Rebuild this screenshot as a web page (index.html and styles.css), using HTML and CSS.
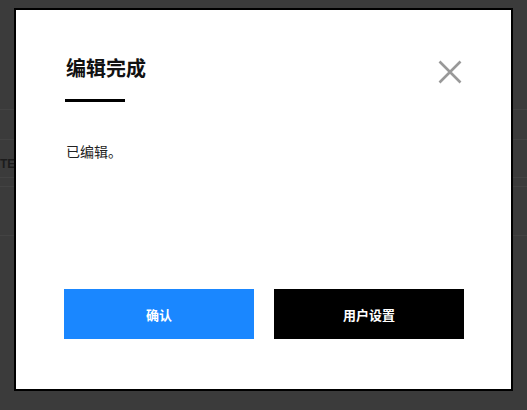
FILE: index.html
```html
<!DOCTYPE html>
<html lang="zh-CN">
<head>
<meta charset="utf-8">
<title>编辑完成</title>
<link rel="stylesheet" href="styles.css">
</head>
<body>
<div class="page">
  <div class="row r1"></div>
  <div class="row r2"></div>
  <div class="row r3"><span class="note">TE:</span></div>
  <div class="row r4"></div>
  <div class="row r5"></div>
</div>
<div class="modal" role="dialog">
  <div class="modal-head">
    <h2 class="title">编辑完成</h2>
    <button class="close" aria-label="关闭">
      <svg width="24" height="24" viewBox="0 0 24 24"><path d="M1.5 1.5L22.5 22.5M22.5 1.5L1.5 22.5" stroke="#999" stroke-width="2.6" fill="none"/></svg>
    </button>
  </div>
  <div class="bar"></div>
  <p class="msg">已编辑。</p>
  <div class="actions">
    <button class="btn btn-primary">确认</button>
    <button class="btn btn-dark">用户设置</button>
  </div>
</div>
</body>
</html>
```
FILE: styles.css
```css
*, *::before, *::after {
  box-sizing: border-box;
}
html, body {
  margin: 0;
  padding: 0;
}
body {
  width: 527px;
  height: 410px;
  overflow: hidden;
  background: #3b3b3b;
  font-family: "Noto Sans CJK SC", "Noto Sans", sans-serif;
  position: relative;
}
.page {
  display: flex;
  flex-direction: column;
}
.row {
  border-bottom: 1px solid #434343;
}
.r1 { height: 110px; }
.r2 { height: 30px; }
.r3 {
  height: 38px;
  padding-top: 17px;
}
.r4 { height: 9px; }
.r5 { height: 49px; }
.note {
  display: block;
  font-family: "Liberation Sans", sans-serif;
  font-weight: bold;
  font-size: 12px;
  line-height: 14px;
  color: #1c1c1c;
}
.modal {
  position: absolute;
  left: 14px;
  top: 8px;
  width: 499px;
  height: 383px;
  background: #fff;
  border: 2px solid #000;
  padding: 46px 47px 50px 48px;
  display: flex;
  flex-direction: column;
}
.modal-head {
  display: flex;
  justify-content: space-between;
  align-items: flex-start;
  height: 24px;
}
.title {
  margin: 0 0 0 2px;
  font-size: 20px;
  line-height: 24px;
  font-weight: bold;
  color: #111;
}
.close {
  margin: 4px 2px 0 0;
  padding: 0;
  border: 0;
  background: none;
  width: 24px;
  height: 24px;
  display: block;
}
.close svg { display: block; }
.bar {
  margin: 19px 0 0 1px;
  width: 60px;
  height: 3px;
  background: #000;
}
.msg {
  margin: 39px 0 0 2px;
  font-size: 14px;
  line-height: 20px;
  color: #222;
  flex: 1;
}
.actions {
  display: flex;
  gap: 20px;
}
.btn {
  width: 190px;
  height: 50px;
  border: 0;
  padding: 0;
  color: #fff;
  font-family: "Noto Sans CJK SC", sans-serif;
  font-weight: bold;
  font-size: 13px;
}
.btn-primary { background: #1a87ff; }
.btn-dark { background: #000; }
```
